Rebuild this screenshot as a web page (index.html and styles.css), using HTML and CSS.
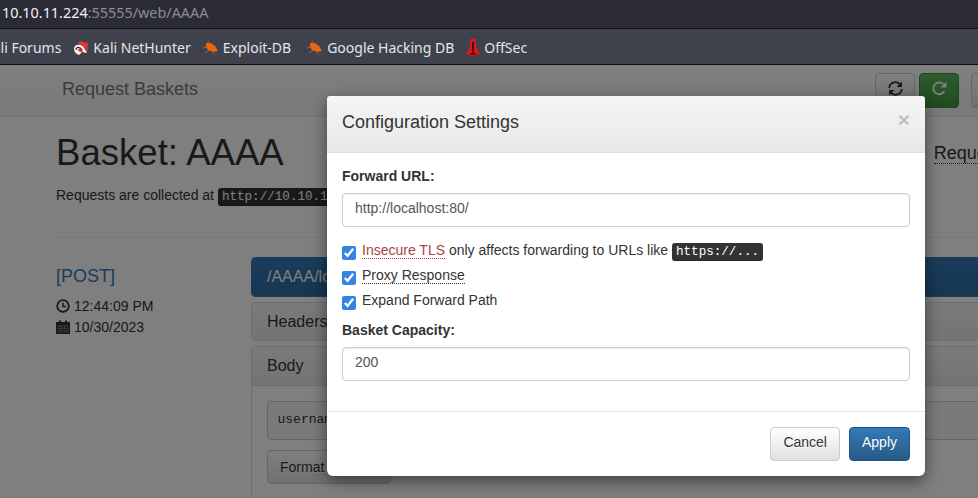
FILE: index.html
```html
<!DOCTYPE html>
<html lang="en">
<head>
    <meta charset="UTF-8">
    <title>Request Baskets</title>
    <link rel="stylesheet" href="styles.css">
</head>
<body>
    <div class="url-bar">
        <span class="host">10.10.11.224</span><span class="path">:55555/web/AAAA</span>
    </div>
    <div class="bookmarks">
        <span class="mark">Kali Forums</span>
        <span class="mark">
            <svg class="fav" width="16" height="16" viewBox="0 0 16 16">
                <path d="M6 1 L15 3 L14 13 L5 12 Z" fill="#d9383a"/>
                <path d="M1 9 C1 4 8 3 11 8 L14 13 L10 12 C9 8 6 7 5 10 C6 12 8 12 9 12 L6 15 C3 14 1 12 1 9 Z" fill="#f4f4f4"/>
                <path d="M3 10 C3 7 7 6 9 10" fill="none" stroke="#333" stroke-width="1.2"/>
            </svg>
            Kali NetHunter
        </span>
        <span class="mark mark-wide">
            <svg class="fav" width="16" height="14" viewBox="0 0 16 14">
                <path d="M3 2 L8 2 L12 5 L15 10 L10 11 L5 9 L3 6 Z" fill="#e8640f"/>
                <path d="M0 7 L4 6 M5 0 L7 3 M2 12 L6 9 M11 13 L10 10" stroke="#a8622e" stroke-width="1"/>
            </svg>
            Exploit-DB
        </span>
        <span class="mark">
            <svg class="fav" width="16" height="14" viewBox="0 0 16 14">
                <path d="M3 2 L8 2 L12 5 L15 10 L10 11 L5 9 L3 6 Z" fill="#e8640f"/>
                <path d="M0 7 L4 6 M5 0 L7 3 M2 12 L6 9 M11 13 L10 10" stroke="#a8622e" stroke-width="1"/>
            </svg>
            Google Hacking DB
        </span>
        <span class="mark">
            <svg class="fav" width="14" height="17" viewBox="0 0 14 17">
                <path d="M4 0 H10 L10 8 L14 15 L9 17 H5 L0 15 L4 8 Z" fill="#d8181c"/>
                <path d="M7 3 V15" stroke="#4a0c0e" stroke-width="2"/>
                <path d="M4 15 H10" stroke="#4a0c0e" stroke-width="1.5"/>
            </svg>
            OffSec
        </span>
    </div>

    <div class="page">
        <nav class="navbar">
            <span class="brand">Request Baskets</span>
            <div class="nav-buttons">
                <button class="btn btn-icon">
                    <svg width="15" height="15" viewBox="0 0 14 14" fill="none" stroke="#333" stroke-width="1.7">
                        <path d="M1.2 6.5 A5.6 5.6 0 0 1 11 3"/>
                        <path d="M12.8 7.5 A5.6 5.6 0 0 1 3 11"/>
                        <path d="M13 0.5 V5.5 H8" fill="#333" stroke="none"/>
                        <path d="M1 13.5 V8.5 H6" fill="#333" stroke="none"/>
                    </svg>
                </button>
                <button class="btn btn-icon btn-success">
                    <svg width="15" height="15" viewBox="0 0 14 14" fill="none" stroke="#fff" stroke-width="1.7">
                        <path d="M11.6 9.5 A5.5 5.5 0 1 1 10.5 2.8"/>
                        <path d="M13.5 0.5 V6 H8" fill="#fff" stroke="none"/>
                    </svg>
                </button>
                <button class="btn btn-icon"></button>
            </div>
        </nav>

        <div class="content">
            <div class="title-row">
                <h1>Basket: AAAA</h1>
                <span class="requests-link">Requests</span>
            </div>
            <p class="collected">Requests are collected at <kbd>http://10.10.11.224:55555/AAAA</kbd></p>
            <hr>
            <div class="request-row">
                <div class="request-info">
                    <h4 class="method">[POST]</h4>
                    <div class="stamp">
                        <svg width="14" height="14" viewBox="0 0 14 14" fill="none" stroke="#333">
                            <circle cx="7" cy="7" r="5.8" stroke-width="1.8"/>
                            <path d="M7 3.5 V7.5 H10" stroke-width="1.5"/>
                        </svg>
                        12:44:09 PM
                    </div>
                    <div class="stamp">
                        <svg width="14" height="14" viewBox="0 0 14 14">
                            <path d="M0 2 H3 V0.5 H5 V2 H9 V0.5 H11 V2 H14 V14 H0 Z" fill="#333"/>
                            <path d="M1 6 H13 M1 8.5 H13 M1 11 H13 M3.5 5 V13 M6 5 V13 M8.5 5 V13 M11 5 V13" stroke="#808080" stroke-width="0.7"/>
                        </svg>
                        10/30/2023
                    </div>
                </div>
                <div class="request-panels">
                    <div class="panel panel-primary"><div class="panel-heading">/AAAA/login</div></div>
                    <div class="panel"><div class="panel-heading">Headers</div></div>
                    <div class="panel">
                        <div class="panel-heading">Body</div>
                        <div class="panel-body">
                            <pre>username=</pre>
                            <button class="btn btn-format">Format JSON</button>
                        </div>
                    </div>
                </div>
            </div>
        </div>

        <div class="backdrop"></div>

        <div class="modal">
            <div class="modal-header">
                <h4>Configuration Settings</h4>
                <span class="close">&times;</span>
            </div>
            <div class="modal-body">
                <label class="field-label" for="forward-url">Forward URL:</label>
                <input class="field" id="forward-url" type="text" value="http://localhost:80/">
                <div class="checks">
                    <label class="check"><input type="checkbox" checked><span><abbr class="danger">Insecure TLS</abbr> only affects forwarding to URLs like <kbd>https://...</kbd></span></label>
                    <label class="check"><input type="checkbox" checked><span><abbr>Proxy Response</abbr></span></label>
                    <label class="check"><input type="checkbox" checked><span>Expand Forward Path</span></label>
                </div>
                <label class="field-label" for="capacity">Basket Capacity:</label>
                <input class="field" id="capacity" type="text" value="200">
            </div>
            <div class="modal-footer">
                <button class="btn">Cancel</button>
                <button class="btn btn-primary">Apply</button>
            </div>
        </div>
    </div>
</body>
</html>
```

FILE: styles.css
```css
* {
    box-sizing: border-box;
}
html, body {
    height: 100%;
}
body {
    margin: 0;
    overflow: hidden;
    display: flex;
    flex-direction: column;
    font-family: "Liberation Sans", Arial, sans-serif;
    font-size: 14px;
    line-height: 20px;
    color: #333;
    background: #fff;
}

/* browser chrome */
.url-bar {
    height: 29px;
    flex: none;
    padding-left: 2px;
    background: #2a2b37;
    border-bottom: 1px solid #111218;
    font-family: "Noto Sans", sans-serif;
    font-size: 14.4px;
    line-height: 26px;
    white-space: nowrap;
}
.host {
    color: #f2f2f4;
}
.path {
    color: #8b8c94;
}
.bookmarks {
    height: 36px;
    flex: none;
    display: flex;
    align-items: center;
    gap: 12px;
    margin-left: -16px;
    padding-top: 2px;
    background: #3f424c;
    border-bottom: 1px solid #0c0d12;
    font-family: "Noto Sans", sans-serif;
    font-size: 14px;
    color: #e4e5ea;
    white-space: nowrap;
}
.mark {
    display: flex;
    align-items: center;
    gap: 4px;
}
.mark-wide {
    margin-right: 4px;
}

/* page under the dialog */
.page {
    position: relative;
    flex: 1;
    overflow: hidden;
}
.navbar {
    height: 52px;
    display: flex;
    width: 1100px;
    padding: 8px 0 0 62px;
    background: linear-gradient(#fff, #f4f4f4);
    border-bottom: 1px solid #e7e7e7;
}
.brand {
    font-size: 18px;
    line-height: 32px;
    color: #777;
}
.nav-buttons {
    display: flex;
    gap: 4px;
    margin-left: 677px;
}
.nav-buttons .btn:last-child {
    margin-left: 8px;
}
.btn {
    height: 34px;
    padding: 4px 12px 8px;
    border: 1px solid #ccc;
    border-radius: 4px;
    background: linear-gradient(#fff, #e0e0e0);
    font: inherit;
    color: #333;
    text-shadow: 0 1px 0 #fff;
}
.btn-icon {
    width: 40px;
    height: 35px;
    padding: 0 0 4px;
    display: flex;
    align-items: center;
    justify-content: center;
}
.btn-success {
    background: linear-gradient(#5cb85c, #419641);
    border-color: #3e8f3e;
}
.btn-primary {
    background: linear-gradient(#337ab7, #265a88);
    border-color: #245580;
    color: #fff;
    text-shadow: 0 -1px 0 rgba(0, 0, 0, .2);
}
.btn-format {
    width: 124px;
    padding-top: 6px;
    padding-bottom: 6px;
    text-align: left;
}

.content {
    width: 1100px;
    padding: 16px 0 0 56px;
}
.title-row {
    display: flex;
    align-items: center;
}
h1 {
    margin: 0;
    font-size: 36.6px;
    font-weight: 500;
    line-height: 40px;
}
.requests-link {
    margin-left: 650px;
    font-size: 18px;
    border-bottom: 1px dotted #333;
}
.collected {
    margin: 12px 0 0;
}
kbd {
    padding: 2px 4px;
    border-radius: 3px;
    background: #333;
    color: #fff;
    font-family: "Liberation Mono", monospace;
    font-size: 12.6px;
    box-shadow: inset 0 -1px 0 rgba(0, 0, 0, .25);
}
hr {
    margin: 30px 0 19px;
    border: 0;
    border-top: 1px solid #eee;
}
.request-row {
    display: flex;
}
.request-info {
    width: 195px;
    flex: none;
    padding-top: 9px;
}
.method {
    margin: 0 0 10px;
    font-size: 18px;
    font-weight: 500;
    line-height: 20px;
    color: #337ab7;
}
.stamp {
    display: flex;
    align-items: center;
    gap: 4px;
    margin-bottom: 1px;
}
.request-panels {
    flex: 1;
}
.panel {
    margin-bottom: 5px;
    border: 1px solid #ddd;
    border-radius: 4px;
}
.panel-heading {
    padding: 10px 15px;
    font-size: 16px;
    line-height: 17.6px;
    background: linear-gradient(#f5f5f5, #e8e8e8);
    border-radius: 3px;
}
.panel + .panel .panel-heading:not(:last-child) {
    border-bottom: 1px solid #ddd;
    border-radius: 3px 3px 0 0;
}
.panel-primary {
    border-color: #337ab7;
}
.panel-primary .panel-heading {
    background: linear-gradient(#337ab7, #2e6da4);
    color: #fff;
}
.panel-body {
    padding: 15px;
}
pre {
    margin: 0 0 10px;
    padding: 9.5px;
    border: 1px solid #ccc;
    border-radius: 4px;
    background: #f5f5f5;
    font-family: "Liberation Mono", monospace;
    font-size: 13px;
    line-height: 18.6px;
}

.backdrop {
    position: absolute;
    inset: 0;
    background: rgba(0, 0, 0, .5);
}

/* dialog */
.modal {
    position: absolute;
    top: 31px;
    left: 327px;
    width: 598px;
    border-radius: 6px;
    background: #fff;
    box-shadow: 0 5px 15px rgba(0, 0, 0, .5);
}
.modal-header {
    display: flex;
    justify-content: space-between;
    padding: 12px 15px 16px;
    background: linear-gradient(#f5f5f5, #e8e8e8);
    border-bottom: 1px solid #ddd;
    border-radius: 3px 3px 0 0;
}
.modal-header h4 {
    margin: 0;
    font-size: 18px;
    font-weight: 500;
    line-height: 28px;
}
.close {
    font-size: 21px;
    font-weight: bold;
    line-height: 24px;
    color: #000;
    opacity: .2;
    text-shadow: 0 1px 0 #fff;
}
.modal-body {
    padding: 13px 15px 30px;
}
.field-label {
    display: block;
    margin-bottom: 7px;
    font-weight: bold;
}
.field {
    display: block;
    width: 100%;
    height: 34px;
    padding: 4px 12px 8px;
    border: 1px solid #ccc;
    border-radius: 4px;
    font: inherit;
    color: #555;
    box-shadow: inset 0 1px 1px rgba(0, 0, 0, .075);
}
.checks {
    display: flex;
    flex-direction: column;
    gap: 5px;
    margin: 13px 0 10px;
}
.check {
    display: flex;
    gap: 6px;
    height: 20px;
}
.check input {
    width: 14px;
    height: 14px;
    margin: 6px 0 0;
    accent-color: #3584e4;
}
abbr {
    border-bottom: 1px dotted #333;
}
abbr.danger {
    color: #a94442;
    border-bottom-color: #a94442;
}
.modal-footer {
    display: flex;
    justify-content: flex-end;
    gap: 9px;
    padding: 15px;
    border-top: 1px solid #e5e5e5;
}
```
